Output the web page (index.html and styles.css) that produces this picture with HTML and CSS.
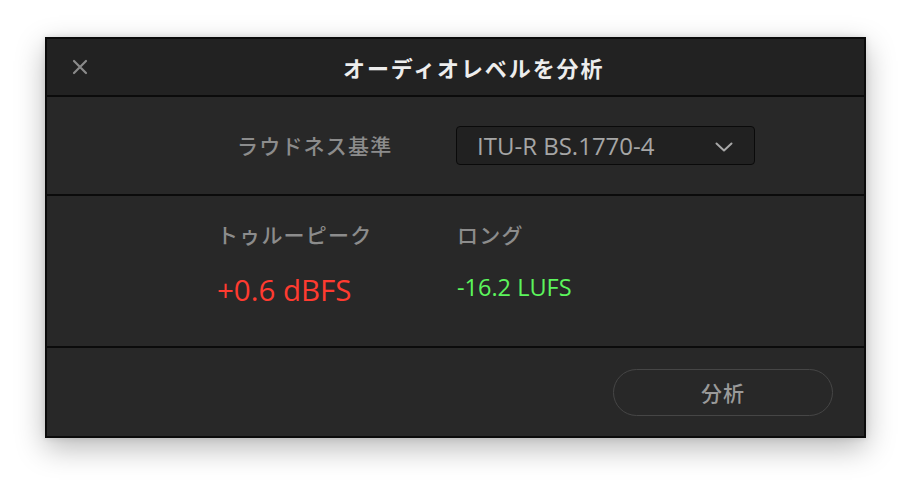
FILE: index.html
```html
<!DOCTYPE html>
<html lang="ja">
<head>
<meta charset="utf-8">
<title>オーディオレベルを分析</title>
<link rel="stylesheet" href="styles.css">
</head>
<body>
<div class="dialog">
  <header class="header">
    <button class="close" aria-label="閉じる">
      <svg width="16" height="16" viewBox="0 0 16 16"><path d="M2 2 L14 14 M14 2 L2 14" stroke="#8a8a8a" stroke-width="2.2" stroke-linecap="round" fill="none"/></svg>
    </button>
    <h1 class="title">オーディオレベルを分析</h1>
  </header>
  <section class="standard">
    <span class="label">ラウドネス基準</span>
    <div class="select">
      <span class="select-text">ITU-R BS.1770-4</span>
      <svg class="chevron" width="18" height="10" viewBox="0 0 18 10"><path d="M1.5 1.5 L9 8.5 L16.5 1.5" stroke="#a8a8a8" stroke-width="2" fill="none" stroke-linecap="round" stroke-linejoin="round"/></svg>
    </div>
  </section>
  <section class="results">
    <div class="metric">
      <span class="label">トゥルーピーク</span>
      <span class="value peak">+0.6 dBFS</span>
    </div>
    <div class="metric">
      <span class="label">ロング</span>
      <span class="value lufs">-16.2 LUFS</span>
    </div>
  </section>
  <footer class="footer">
    <button class="analyze">分析</button>
  </footer>
</div>
</body>
</html>
```
FILE: styles.css
```css
html, body {
  margin: 0;
  padding: 0;
  background: #ffffff;
}
body {
  width: 912px;
  height: 492px;
  overflow: hidden;
  font-family: "Noto Sans CJK JP", "Open Sans", sans-serif;
}
.dialog {
  margin: 37px 0 0 45px;
  width: 817px;
  height: 397px;
  border: 2px solid #0b0b0b;
  background: #282828;
  display: flex;
  flex-direction: column;
  box-shadow: 0 10px 28px rgba(0,0,0,0.28), 0 0 6px rgba(0,0,0,0.12);
}
.header {
  height: 56px;
  background: #222222;
  border-bottom: 2px solid #0b0b0b;
  display: flex;
  align-items: center;
  position: relative;
}
.close {
  position: absolute;
  left: 25px;
  top: 20px;
  width: 16px;
  height: 16px;
  padding: 0;
  border: 0;
  background: none;
  display: block;
}
.close svg { display: block; }
.title {
  margin: 0 0 0 296px;
  font-size: 22px;
  font-weight: 700;
  color: #ededed;
  letter-spacing: 1.9px;
  line-height: 1;
}
.standard {
  height: 97px;
  border-bottom: 2px solid #0b0b0b;
  display: flex;
  align-items: center;
  padding-left: 190px;
}
.label {
  font-size: 21px;
  font-weight: 500;
  color: #8c8c8c;
  letter-spacing: 1.2px;
  line-height: 1;
}
.standard .label {
  width: 219px;
}
.select {
  box-sizing: border-box;
  width: 299px;
  height: 39px;
  border: 1px solid #0a0a0a;
  border-radius: 4px;
  background: #212121;
  display: flex;
  align-items: center;
  justify-content: space-between;
  padding: 0 21px 0 20px;
}
.select-text {
  font-family: "Open Sans", sans-serif;
  font-size: 24px;
  color: #a6a6a6;
  line-height: 1;
}
.chevron { display: block; margin-top: 2px; }
.results {
  height: 150px;
  border-bottom: 2px solid #0b0b0b;
  display: flex;
  padding-left: 170px;
}
.metric {
  width: 240px;
  display: flex;
  flex-direction: column;
}
.metric .label {
  margin-top: 28px;
}
.value {
  font-family: "Open Sans", sans-serif;
  line-height: 1;
}
.peak {
  margin-top: 30px;
  font-size: 29.5px;
  color: #ff3b30;
}
.lufs {
  margin-top: 31px;
  font-size: 23.5px;
  color: #5cf55c;
}
.footer {
  flex: 1;
  display: flex;
  align-items: center;
  justify-content: flex-end;
  padding-right: 31px;
}
.analyze {
  width: 220px;
  height: 47px;
  border: 1px solid #464646;
  border-radius: 24px;
  background: #282828;
  color: #9a9a9a;
  font-family: "Noto Sans CJK JP", sans-serif;
  font-size: 21px;
  font-weight: 500;
  letter-spacing: 1px;
  padding: 0;
}
```
